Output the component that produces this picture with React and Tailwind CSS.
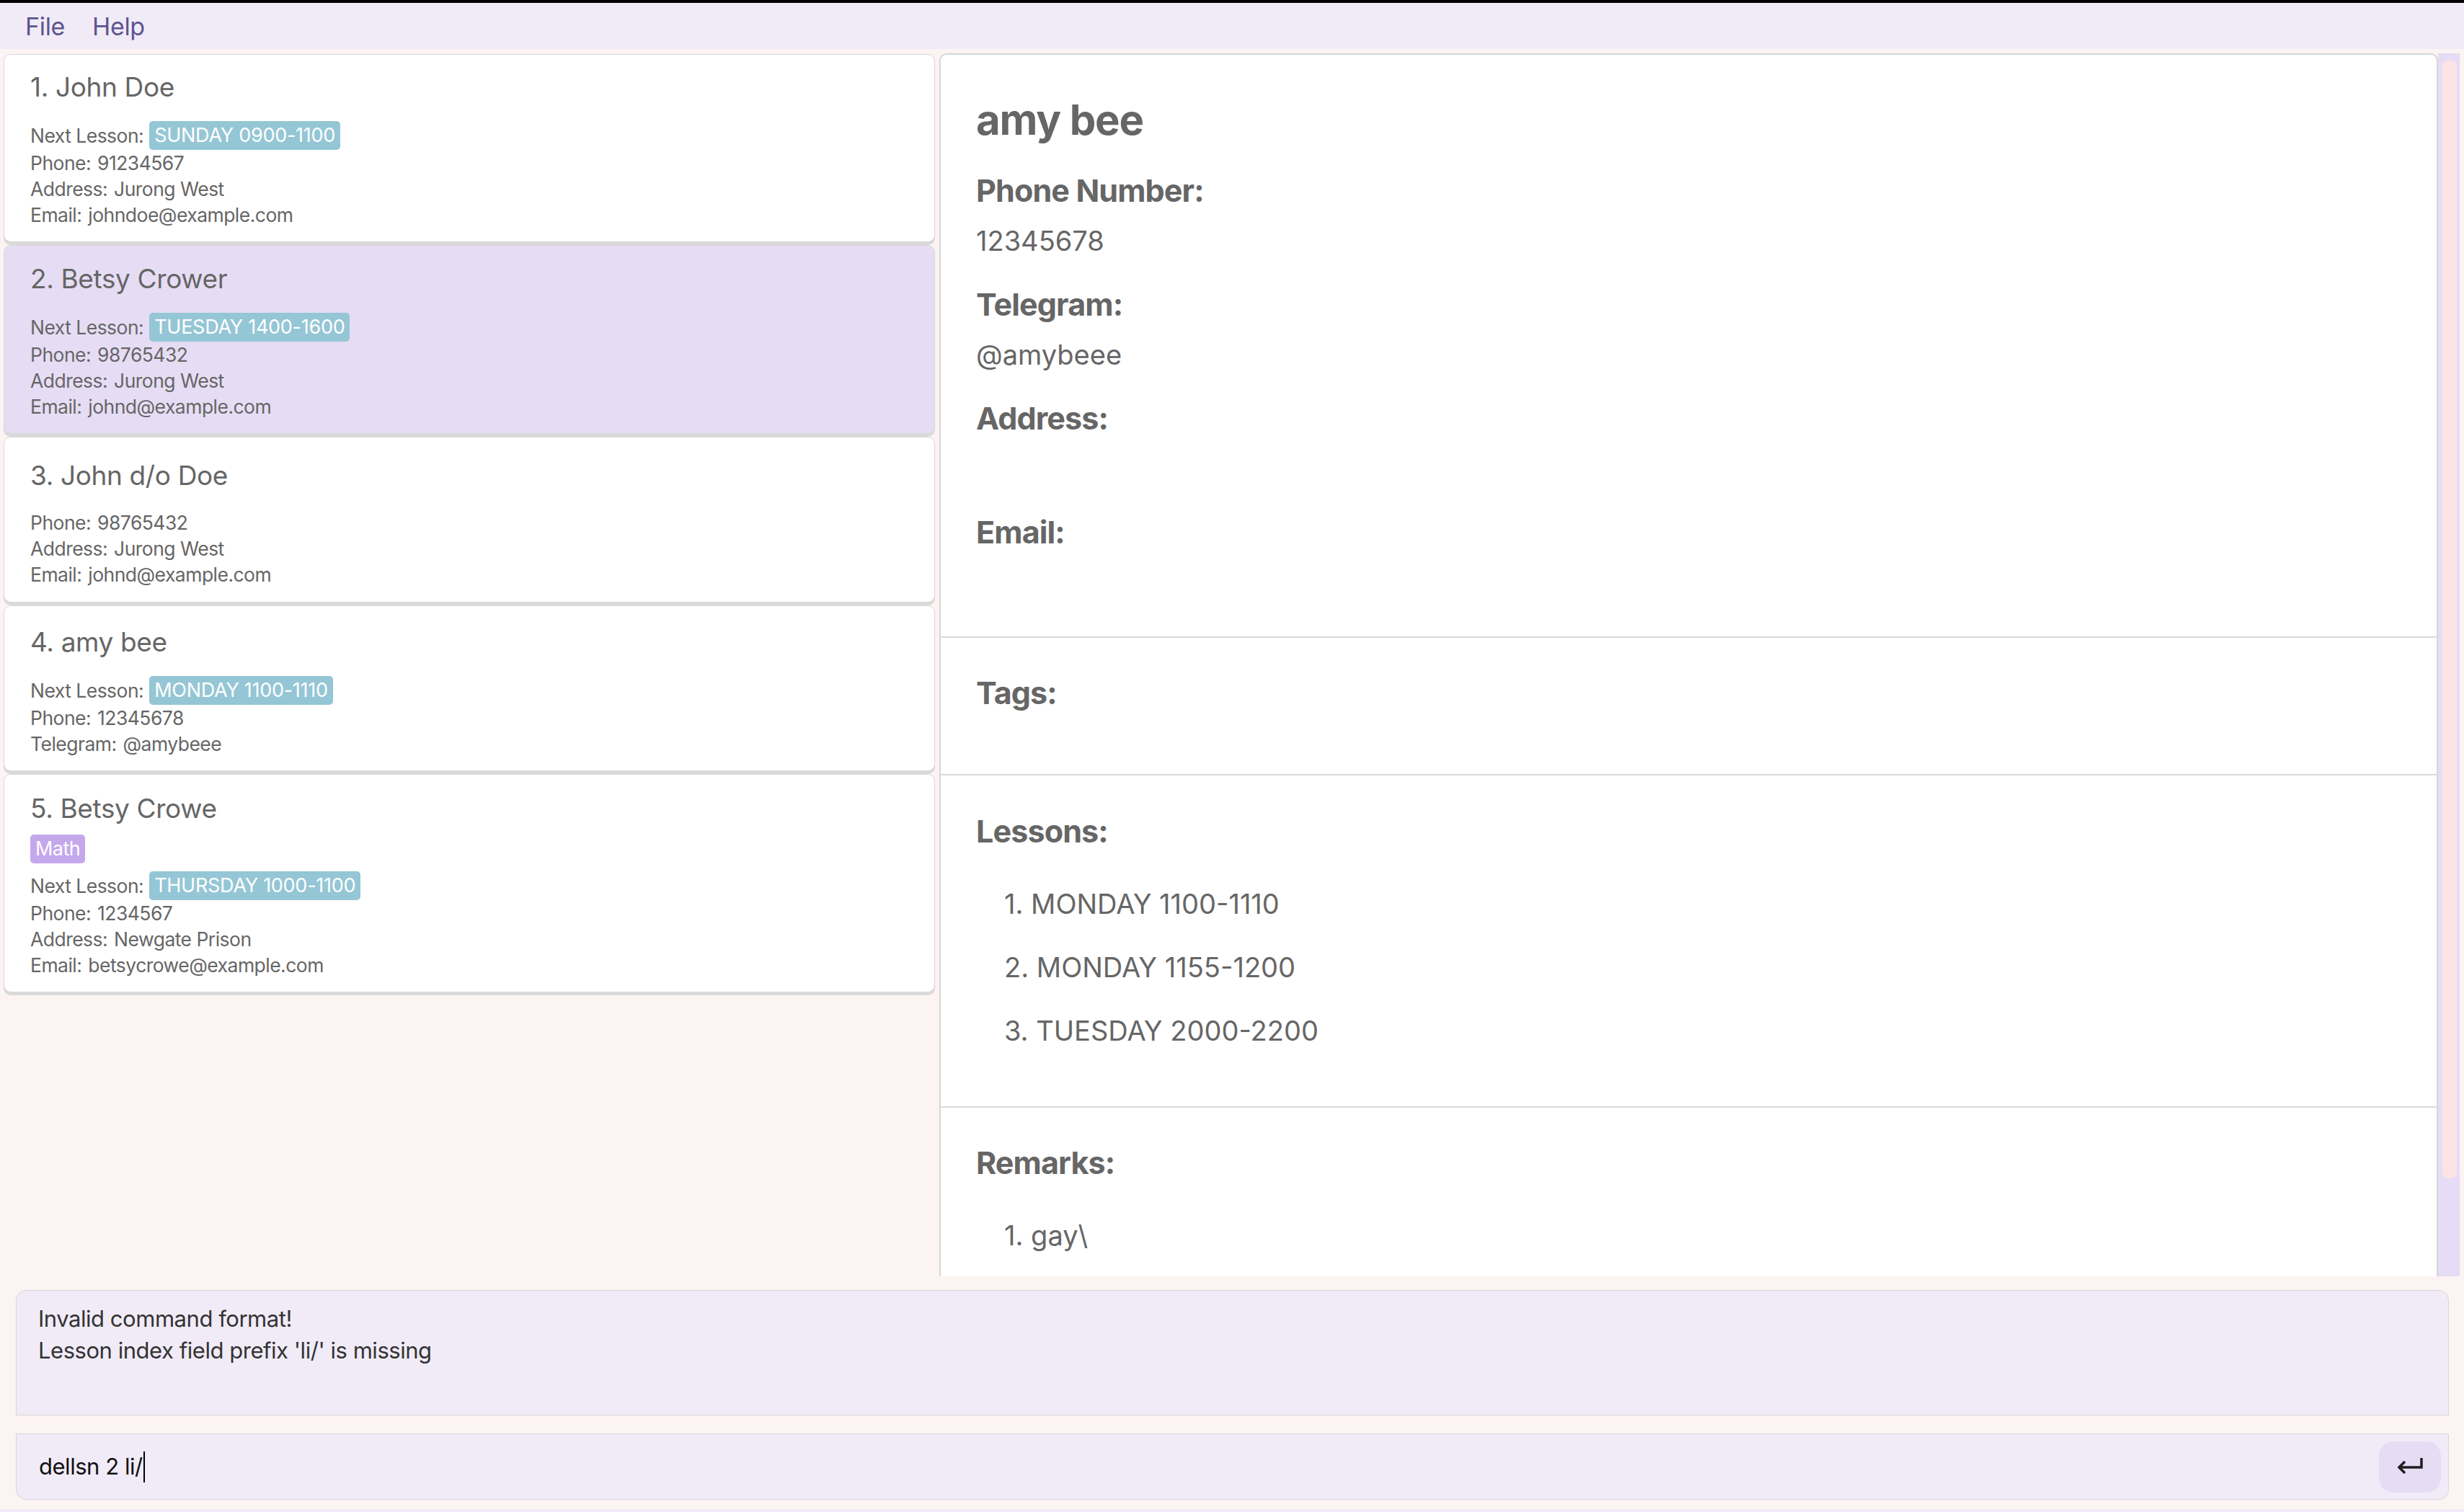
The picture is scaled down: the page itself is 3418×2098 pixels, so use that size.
import React from "react";

const cards = [
  {
    n: 1,
    name: "John Doe",
    lesson: "SUNDAY 0900-1100",
    rows: [
      ["Phone", "91234567"],
      ["Address", "Jurong West"],
      ["Email", "johndoe@example.com"],
    ],
  },
  {
    n: 2,
    name: "Betsy Crower",
    lesson: "TUESDAY 1400-1600",
    selected: true,
    pad: "pt-[23px] pb-[19px]",
    rows: [
      ["Phone", "98765432"],
      ["Address", "Jurong West"],
      ["Email", "johnd@example.com"],
    ],
  },
  {
    n: 3,
    name: "John d/o Doe",
    pad: "pt-[30px] pb-[20px]",
    rows: [
      ["Phone", "98765432"],
      ["Address", "Jurong West"],
      ["Email", "johnd@example.com"],
    ],
  },
  {
    n: 4,
    name: "amy bee",
    lesson: "MONDAY 1100-1110",
    pad: "pt-[27px] pb-[19px]",
    rows: [
      ["Phone", "12345678"],
      ["Telegram", "@amybeee"],
    ],
  },
  {
    n: 5,
    name: "Betsy Crowe",
    tags: ["Math"],
    lesson: "THURSDAY 1000-1100",
    pad: "pt-[24px] pb-[19px]",
    rows: [
      ["Phone", "1234567"],
      ["Address", "Newgate Prison"],
      ["Email", "betsycrowe@example.com"],
    ],
  },
];

function Card({ c }) {
  return (
    <div
      className={`rounded-[10px] border-[1.5px] border-[#d9d9d9] shadow-[0_4px_0_0_#d9d9d9] pl-[36px] ${
        c.selected ? "bg-[#e6ddf5]" : "bg-white"
      } ${c.pad || "pt-[22px] pb-[19px]"}`}
    >
      <div className="text-[37px] leading-[46px] tracking-[-0.01em] text-[#666666]">
        {c.n}. {c.name}
      </div>
      <div className="mt-[13px] flex gap-[8px]">
        {(c.tags || []).map((t) => (
          <span
            key={t}
            className="h-[40px] px-[7px] rounded-[5px] bg-[#c4a8ec] text-white text-[27px] leading-[40px] tracking-[-0.02em]"
          >
            {t}
          </span>
        ))}
      </div>
      <div className="mt-[11px] text-[26.5px] leading-[36px] tracking-[-0.02em] text-[#666666]">
        {c.lesson && (
          <div className="flex items-center h-[40px]">
            <span>Next Lesson:</span>
            <span className="ml-[8px] h-[40px] px-[7px] rounded-[5px] bg-[#95c6d5] text-white text-[27px] leading-[40px] tracking-[-0.01em]">
              {c.lesson}
            </span>
          </div>
        )}
        {c.rows.map(([k, v]) => (
          <div key={k} className="flex">
            <span>{k}:</span>
            <span className="ml-[9px]">{v}</span>
          </div>
        ))}
      </div>
    </div>
  );
}

const H = "text-[43px] leading-[53px] font-bold tracking-[-0.02em] text-[#666666]";
const V = "text-[38px] leading-[46px] text-[#666666] h-[46px]";

function Field({ label, value }) {
  return (
    <div className="flex flex-col">
      <div className={H}>{label}</div>
      <div className={`mt-[20px] ${V}`}>{value}</div>
    </div>
  );
}

export default function App() {
  return (
    <div className="w-[3418px] h-[2098px] flex flex-col bg-[#fcf3f3] font-['Inter',sans-serif] overflow-hidden">
      <div className="h-[4px] bg-black" />
      <div className="h-[64px] bg-[#f1ebf7] flex items-center pl-[35px] gap-[38px] text-[34px] text-[#5d5592] tracking-[-0.01em]">
        <span>File</span>
        <span>Help</span>
      </div>

      <div className="h-[1703px] flex pt-[6px]">
        <div className="w-[1303px] pl-[5px] pr-[6px] pt-[1px] flex flex-col gap-[4px]">
          {cards.map((c) => (
            <Card key={c.n} c={c} />
          ))}
        </div>

        <div className="flex-1 min-w-0 bg-white border-[2px] border-b-0 border-[#d6d6d6] rounded-t-[10px] overflow-hidden flex flex-col">
          <div className="pl-[49px] pt-[55px] pb-[52px] flex flex-col">
            <div className="text-[58px] leading-[70px] font-bold tracking-[-0.02em] text-[#666666]">
              amy bee
            </div>
            <div className="mt-[37px] flex flex-col gap-[39px]">
              <Field label="Phone Number:" value="12345678" />
              <Field label="Telegram:" value="@amybeee" />
              <Field label="Address:" value="" />
              <Field label="Email:" value="" />
            </div>
          </div>
          <div className="border-t-[2px] border-[#d9d9d9] pl-[49px] pt-[50px] pb-[86px]">
            <div className={H}>Tags:</div>
          </div>
          <div className="border-t-[2px] border-[#d9d9d9] pl-[49px] pt-[51px] pb-[82px]">
            <div className={H}>Lessons:</div>
            <div className="mt-[51px] pl-[39px] flex flex-col gap-[42px]">
              <div className={V}>1. MONDAY 1100-1110</div>
              <div className={V}>2. MONDAY 1155-1200</div>
              <div className={V}>3. TUESDAY 2000-2200</div>
            </div>
          </div>
          <div className="border-t-[2px] border-[#d9d9d9] pl-[49px] pt-[50px]">
            <div className={H}>Remarks:</div>
            <div className="mt-[51px] pl-[39px] flex flex-col gap-[42px]">
              <div className={V}>1. gay\</div>
            </div>
          </div>
        </div>

        <div className="w-[30px] mr-[6px] bg-[#e6dcf5] pt-[10px]">
          <div className="ml-[6px] w-[20px] h-[1551px] rounded-[8px] bg-[#fde4e4]" />
        </div>
      </div>

      <div className="pt-[19px] pl-[22px] pr-[21px]">
        <div className="h-[174px] bg-[#f1ebf7] border-[1.5px] border-[#d6d6d6] rounded-t-[14px] pl-[30px] pt-[17px] text-[31px] leading-[44px] text-[#333333] tracking-[-0.015em]">
          <div>Invalid command format!</div>
          <div>Lesson index field prefix 'li/' is missing</div>
        </div>
        <div className="mt-[25px] h-[92px] bg-[#f1ebf7] border-[1.5px] border-[#d6d6d6] rounded-b-[14px] flex items-center pl-[31px] pr-[10px]">
          <div className="flex-1 flex items-center text-[31px] leading-[44px] text-[#111111] tracking-[-0.015em]">
            <span>dellsn 2 li/</span>
            <span className="ml-[1px] inline-block w-[2px] h-[43px] bg-black" />
          </div>
          <div className="w-[86px] h-[71px] rounded-[20px] bg-[#e6ddf5] flex items-center justify-center">
            <svg width="38" height="26" viewBox="0 0 38 26" fill="none" stroke="#1f1f1f" strokeWidth="3.5">
              <path d="M35 1 V14 H4" />
              <path d="M12 6 L4 14 L12 22" />
            </svg>
          </div>
        </div>
      </div>
      <div className="h-[13px]" />
      <div className="h-[4px] bg-[#f1ebf7]" />
    </div>
  );
}
